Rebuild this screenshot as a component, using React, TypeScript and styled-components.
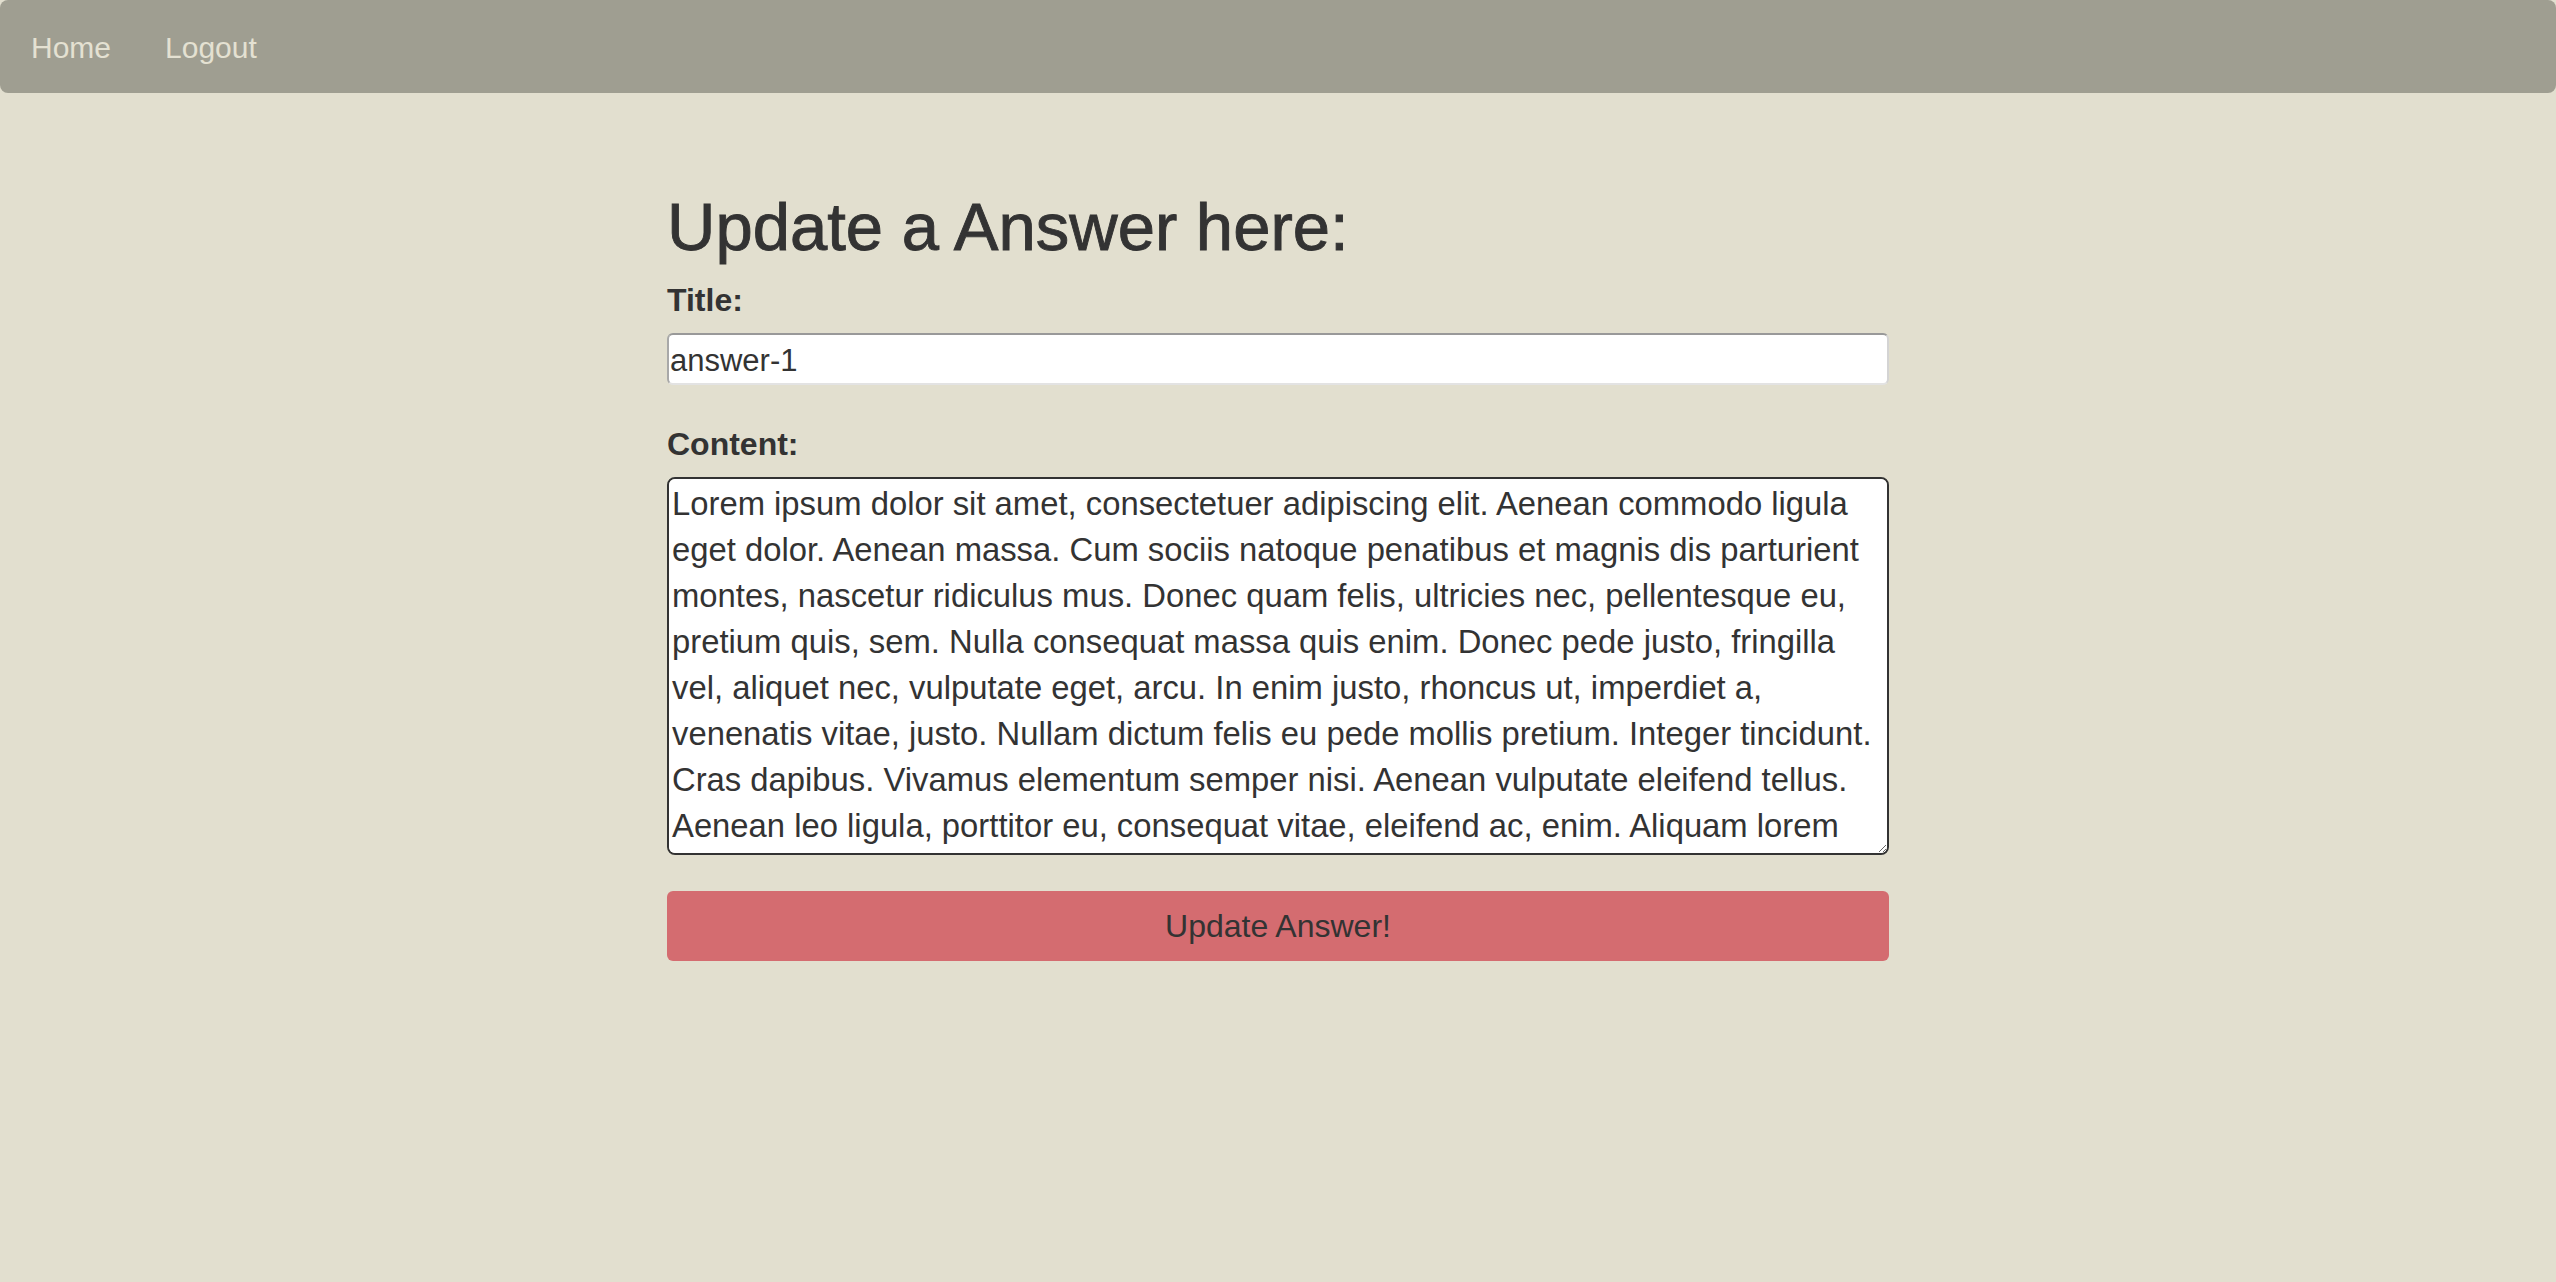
import React from "react";
import styled, { createGlobalStyle } from "styled-components";

const GlobalStyle = createGlobalStyle`
  html, body {
    margin: 0;
    padding: 0;
    background: #e2dfcf;
  }
  body {
    font-family: "Liberation Sans", Arial, Helvetica, sans-serif;
    color: #333333;
  }
  * { box-sizing: border-box; }
`;

const Page = styled.div`
  min-height: 1282px;
  background: #e2dfcf;
`;

const NavBar = styled.nav`
  height: 93px;
  background: #9f9e91;
  border-radius: 8px;
  display: flex;
  align-items: center;
  padding: 3px 0 0 1px;
`;

const NavLink = styled.a`
  font-size: 30px;
  color: #e4e1d2;
  padding: 0 24px 0 30px;
  text-decoration: none;
  cursor: pointer;
`;

const Main = styled.main`
  width: 1222px;
  margin: 0 auto;
`;

const Heading = styled.h1`
  font-size: 67px;
  font-weight: 500;
  line-height: 1.1;
  margin: 97px 0 13px;
  color: #333333;
  -webkit-text-stroke: 0.9px #333333;
`;

const Form = styled.form`
  display: flex;
  flex-direction: column;
`;

const Label = styled.label<{ $gapBefore?: number }>`
  display: block;
  font-size: 32px;
  font-weight: 700;
  line-height: 46px;
  margin-top: ${(p) => p.$gapBefore ?? 0}px;
  margin-bottom: 10px;
  color: #333333;
`;

const TextInput = styled.input`
  display: block;
  width: 100%;
  height: 52px;
  margin: 0;
  padding: 4px 1px 0;
  font-family: "Liberation Sans", Arial, Helvetica, sans-serif;
  font-size: 31px;
  color: #333333;
  background: #ffffff;
  border: 2px solid #b0b0b0;
  border-top-color: #999999;
  border-left-color: #a8a8a8;
  border-right-color: #d4d4d4;
  border-bottom-color: #e3e3e3;
  border-radius: 6px;
  outline: none;
`;

const TextArea = styled.textarea`
  display: block;
  width: 100%;
  height: 378px;
  margin: 0 0 36px;
  padding: 2px 3px;
  font-family: "Liberation Sans", Arial, Helvetica, sans-serif;
  font-size: 32.8px;
  line-height: 46px;
  color: #333333;
  background: #ffffff;
  border: 2px solid #333333;
  border-radius: 8px;
  outline: none;
  scrollbar-width: none;
  white-space: pre-wrap;
`;

const SubmitButton = styled.button`
  display: block;
  width: 100%;
  height: 70px;
  margin: 0;
  padding: 2px 0 0;
  border: none;
  border-radius: 6px;
  background: #d46c70;
  color: #333333;
  font-family: "Liberation Sans", Arial, Helvetica, sans-serif;
  font-size: 32px;
  cursor: pointer;
`;

const contentLines = [
  "Lorem ipsum dolor sit amet, consectetuer adipiscing elit. Aenean commodo ligula",
  "eget dolor. Aenean massa. Cum sociis natoque penatibus et magnis dis parturient",
  "montes, nascetur ridiculus mus. Donec quam felis, ultricies nec, pellentesque eu,",
  "pretium quis, sem. Nulla consequat massa quis enim. Donec pede justo, fringilla",
  "vel, aliquet nec, vulputate eget, arcu. In enim justo, rhoncus ut, imperdiet a,",
  "venenatis vitae, justo. Nullam dictum felis eu pede mollis pretium. Integer tincidunt.",
  "Cras dapibus. Vivamus elementum semper nisi. Aenean vulputate eleifend tellus.",
  "Aenean leo ligula, porttitor eu, consequat vitae, eleifend ac, enim. Aliquam lorem",
  "ante, dapibus in, viverra quis, feugiat a, tellus. Phasellus viverra nulla ut metus",
  "varius laoreet. Quisque rutrum. Aenean imperdiet. Etiam ultricies nisi vel augue.",
  "Curabitur ullamcorper ultricies nisi. Nam eget dui.",
];

export default function App() {
  const [title, setTitle] = React.useState("answer-1");
  const [content, setContent] = React.useState(contentLines.join("\n"));

  return (
    <Page>
      <GlobalStyle />
      <NavBar>
        <NavLink>Home</NavLink>
        <NavLink>Logout</NavLink>
      </NavBar>
      <Main>
        <Heading>Update a Answer here:</Heading>
        <Form onSubmit={(e) => e.preventDefault()}>
          <Label htmlFor="title">Title:</Label>
          <TextInput
            id="title"
            type="text"
            value={title}
            onChange={(e) => setTitle(e.target.value)}
          />
          <Label htmlFor="content" $gapBefore={36}>
            Content:
          </Label>
          <TextArea
            id="content"
            value={content}
            onChange={(e) => setContent(e.target.value)}
          />
          <SubmitButton type="submit">Update Answer!</SubmitButton>
        </Form>
      </Main>
    </Page>
  );
}
